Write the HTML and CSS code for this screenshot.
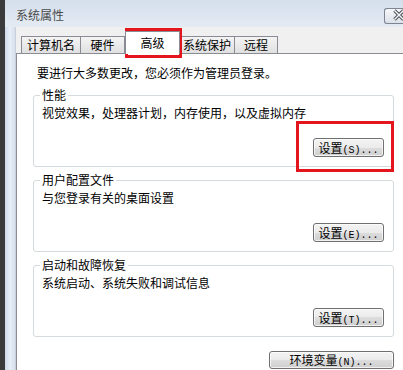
FILE: index.html
```html
<!DOCTYPE html>
<html lang="zh-CN">
<head>
    <meta charset="UTF-8">
    <title>系统属性</title>
    <link rel="stylesheet" href="styles.css">
</head>
<body>
    <div class="shot">
        <div class="window">
            <div class="titlebar">
                <span class="title">系统属性</span>
                <div class="close">
                    <svg width="18" height="14" viewBox="0 0 18 14">
                        <path d="M9.5 1.5 L18.5 10.5 M9.5 10.5 L18.5 1.5" stroke="#4d525b" stroke-width="3.4" fill="none"/>
                        <path d="M9.5 1.5 L18.5 10.5 M9.5 10.5 L18.5 1.5" stroke="#f4f6f8" stroke-width="1.4" fill="none"/>
                    </svg>
                </div>
            </div>
            <div class="frame-body">
                <div class="client">
                    <div class="tabs">
                        <div class="tab t1">计算机名</div>
                        <div class="tab t2">硬件</div>
                        <div class="tab active t3">高级</div>
                        <div class="tab t4">系统保护</div>
                        <div class="tab t5">远程</div>
                    </div>
                    <div class="panel">
                        <p class="intro">要进行大多数更改，您必须作为管理员登录。</p>

                        <fieldset class="group">
                            <legend>性能</legend>
                            <p class="desc">视觉效果，处理器计划，内存使用，以及虚拟内存</p>
                            <div class="row"><button class="btn">设置<span class="acc">(S)...</span></button></div>
                        </fieldset>

                        <fieldset class="group">
                            <legend>用户配置文件</legend>
                            <p class="desc">与您登录有关的桌面设置</p>
                            <div class="row"><button class="btn">设置<span class="acc">(E)...</span></button></div>
                        </fieldset>

                        <fieldset class="group">
                            <legend>启动和故障恢复</legend>
                            <p class="desc">系统启动、系统失败和调试信息</p>
                            <div class="row"><button class="btn">设置<span class="acc">(T)...</span></button></div>
                        </fieldset>

                        <div class="row env"><button class="btn wide">环境变量<span class="acc">(N)...</span></button></div>
                    </div>
                </div>
            </div>
        </div>
        <!-- 红框标注 -->
        <div class="mark mark-tab"></div>
        <div class="mark mark-btn"></div>
    </div>
</body>
</html>
```

FILE: styles.css
```css
html, body {
    margin: 0;
    overflow: hidden;
}
body {
    background: #3b3b3b;
    font-family: "Noto Sans CJK SC", sans-serif;
    font-size: 12px;
    color: #000;
}
.shot {
    position: relative;
    width: 403px;
    height: 370px;
    overflow: hidden;
}
.window {
    margin-left: 5px;
    height: 370px;
    display: flex;
    flex-direction: column;
}
.titlebar {
    height: 27px;
    display: flex;
    align-items: flex-start;
    background: linear-gradient(#d4dfec, #e4ebf3);
}
.title {
    margin: 8px 0 0 11px;
    line-height: 14px;
    color: #4a4a4a;
}
.close {
    margin: 8px 0 0 auto;
    width: 18px;
    height: 14px;
    border: 1px solid #7d8593;
    border-right: 0;
    border-radius: 3px 0 0 3px;
    background: linear-gradient(#f5f7fa, #dce2e9);
}
.close svg {
    display: block;
}
.frame-body {
    flex: 1;
    display: flex;
    padding-left: 11px;
    background: linear-gradient(90deg, #cfdbea 0, #e8eff8 5px, #d6e0ec 10px, #b9c2cc 11px);
}
.client {
    flex: 1;
    display: flex;
    flex-direction: column;
    background: #f0f0f0;
}
.tabs {
    height: 26px;
    display: flex;
    align-items: flex-end;
    padding-left: 5px;
}
.tab {
    height: 16px;
    line-height: 16px;
    border: 1px solid #898c95;
    border-bottom: 0;
    background: linear-gradient(#f4f4f4, #e0e0e0);
    text-align: center;
    margin-left: -1px;
}
.t1 { width: 58px; margin-left: 0; }
.t2 { width: 43px; }
.t3 { width: 53px; margin-left: 0; }
.t4 { width: 54px; }
.t5 { width: 42px; }
.tab.active {
    height: 22px;
    line-height: 22px;
    margin-bottom: -1px;
    background: #fff;
    position: relative;
    z-index: 1;
}
.panel {
    flex: 1;
    background: #fff;
    border-top: 1px solid #898c95;
    border-left: 1px solid #898c95;
    padding: 12px 9px 0 16px;
}
.intro {
    margin: 0;
    padding-left: 4px;
    line-height: 14px;
}
.group {
    margin: 6px 0 0;
    padding: 0 9px 9px 6px;
    border: 1px solid #d5dade;
    border-radius: 3px;
    min-width: 0;
}
.intro + .group {
    margin-top: 8px;
}
.group legend {
    padding: 0 2px;
    line-height: 14px;
}
.desc {
    margin: 4px 0 0;
    padding-left: 2px;
    line-height: 14px;
}
.row {
    display: flex;
    justify-content: flex-end;
    margin-top: 18px;
}
.btn {
    box-sizing: border-box;
    width: 71px;
    height: 19px;
    padding: 0;
    border: 1px solid #707070;
    border-radius: 3px;
    background: linear-gradient(#f3f3f3 0, #ebebeb 50%, #dddddd 50%, #cfcfcf 100%);
    box-shadow: inset 0 0 0 1px rgba(255, 255, 255, 0.7);
    font-family: inherit;
    font-size: 12px;
    line-height: 17px;
    color: #000;
}
.acc {
    font-family: "Liberation Mono", monospace;
    font-size: 10px;
}
.env {
    margin-top: 14px;
}
.btn.wide {
    width: 125px;
    height: 18px;
    line-height: 16px;
}
.mark {
    position: absolute;
    border: 3px solid #e2161c;
}
.mark-tab {
    left: 125px;
    top: 28px;
    width: 51px;
    height: 24px;
}
.mark-btn {
    left: 296px;
    top: 121px;
    width: 92px;
    height: 45px;
}
```
